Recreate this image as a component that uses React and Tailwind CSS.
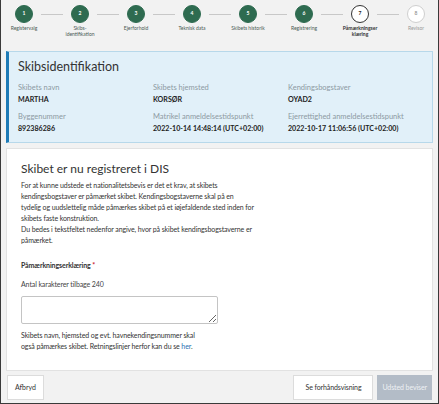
import React from "react";

const steps = [
  { n: 1, label: ["Registervalg"], state: "done" },
  { n: 2, label: ["Skibs-", "identifikation"], state: "done" },
  { n: 3, label: ["Ejerforhold"], state: "done" },
  { n: 4, label: ["Teknisk data"], state: "done" },
  { n: 5, label: ["Skibets historik"], state: "done" },
  { n: 6, label: ["Registrering"], state: "done" },
  { n: 7, label: ["Påmærkningser", "klæring"], state: "current" },
  { n: 8, label: ["Revisor"], state: "todo" },
];

function Step({ s, first, last }) {
  const circle =
    s.state === "done"
      ? "bg-[#2e6b50] text-white border-[#2e6b50]"
      : s.state === "current"
      ? "bg-white text-[#222] border-[#333]"
      : "bg-white text-[#999] border-[#cfcfcf]";
  return (
    <div className="w-[56px] flex flex-col items-center shrink-0">
      <div className="flex items-center w-full">
        <div className="w-[19px] pr-[8px]">
          {!first && <div className="h-px bg-[#c8c8c8]" />}
        </div>
        <div className={`w-[18px] h-[18px] rounded-full border flex items-center justify-center text-[5px] font-bold ${circle}`}>
          {s.n}
        </div>
        <div className="w-[19px] pl-[8px]">
          {!last && <div className="h-px bg-[#c8c8c8]" />}
        </div>
      </div>
      <div
        className={`mt-[2px] text-[5px] leading-[6px] text-center whitespace-nowrap ${
          s.state === "current" ? "font-bold text-[#333]" : s.state === "todo" ? "text-[#999]" : "text-[#4a5a52]"
        }`}
      >
        {s.label.map((l, i) => (
          <div key={i}>{l}</div>
        ))}
      </div>
    </div>
  );
}

function Field({ label, value }) {
  return (
    <div>
      <div className="text-[7.5px] leading-[10px] text-[#8d9aa3]">{label}</div>
      <div className="mt-[2px] text-[7.1px] leading-[10px] font-bold text-[#222]">{value}</div>
    </div>
  );
}

export default function App() {
  return (
    <div className="w-[439px] h-[404px] bg-[#f2f2f2] border-x border-b border-[#3a3a3a] flex flex-col overflow-hidden font-['Lato',sans-serif] text-[#333]">
      <div className="flex ml-[-5px] pt-[5px] h-[47px]">
        {steps.map((s, i) => (
          <Step key={s.n} s={s} first={i === 0} last={i === steps.length - 1} />
        ))}
      </div>

      <div className="mx-[5px] mt-[4px] bg-[#e1f0f9] border border-[#b7d8ea] border-l-[3px] border-l-[#1f7bb6] pl-[9px] pr-[10px] pt-[6px] pb-[8px]">
        <div className="text-[12.5px] leading-[18px] text-[#333]">Skibsidentifikation</div>
        <div className="grid grid-cols-[135px_135px_1fr] gap-y-[7px] mt-[7px]">
          <Field label="Skibets navn" value="MARTHA" />
          <Field label="Skibets hjemsted" value="KORSØR" />
          <Field label="Kendingsbogstaver" value="OYAD2" />
          <Field label="Byggenummer" value="892386286" />
          <Field label="Matrikel anmeldelsestidspunkt" value="2022-10-14 14:48:14 (UTC+02:00)" />
          <Field label="Ejerrettighed anmeldelsestidspunkt" value="2022-10-17 11:06:56 (UTC+02:00)" />
        </div>
      </div>

      <div className="mx-[5px] mt-[5px] flex-1 bg-white border border-[#e2e2e2] px-[14px] pt-[12px]">
        <div className="text-[12px] leading-[16px] text-[#333]">Skibet er nu registreret i DIS</div>
        <p className="mt-[3px] text-[7px] tracking-[-0.1px] leading-[11px] text-[#333]">
          For at kunne udstede et nationalitetsbevis er det et krav, at skibets
          <br />
          kendingsbogstaver er påmærket skibet. Kendingsbogstaverne skal på en
          <br />
          tydelig og uudslettelig måde påmærkes skibet på et iøjefaldende sted inden for
          <br />
          skibets faste konstruktion.
          <br />
          Du bedes i tekstfeltet nedenfor angive, hvor på skibet kendingsbogstaverne er
          <br />
          påmærket.
        </p>
        <div className="mt-[14px] text-[7px] tracking-[-0.1px] leading-[11px] font-bold text-[#333]">
          Påmærkningserklæring <span className="text-[#c8102e]">*</span>
        </div>
        <div className="mt-[8px] text-[7px] tracking-[-0.1px] leading-[11px] text-[#444]">Antal karakterer tilbage 240</div>
        <textarea className="mt-[6px] block w-[197px] h-[28px] border border-[#c4c4c4] rounded-[2px] resize-y bg-white" />
        <p className="mt-[6px] text-[7px] tracking-[-0.1px] leading-[11px] text-[#333]">
          Skibets navn, hjemsted og evt. havnekendingsnummer skal
          <br />
          også påmærkes skibet. Retningslinjer herfor kan du se <span className="text-[#1f6fb2]">her</span>.
        </p>
      </div>

      <div className="flex items-center justify-between px-[6px] h-[32px] shrink-0">
        <button className="h-[25px] px-[7px] bg-white border border-[#dcdcdc] text-[7px] text-[#333]">Afbryd</button>
        <div className="flex gap-[4px]">
          <button className="h-[25px] px-[11px] bg-white border border-[#dcdcdc] text-[7px] tracking-[-0.1px] text-[#333]">Se forhåndsvisning</button>
          <button className="h-[25px] px-[5px] bg-[#b3bcc7] text-[7px] tracking-[-0.1px] text-[#eef1f4]">Udsted beviser</button>
        </div>
      </div>
    </div>
  );
}
